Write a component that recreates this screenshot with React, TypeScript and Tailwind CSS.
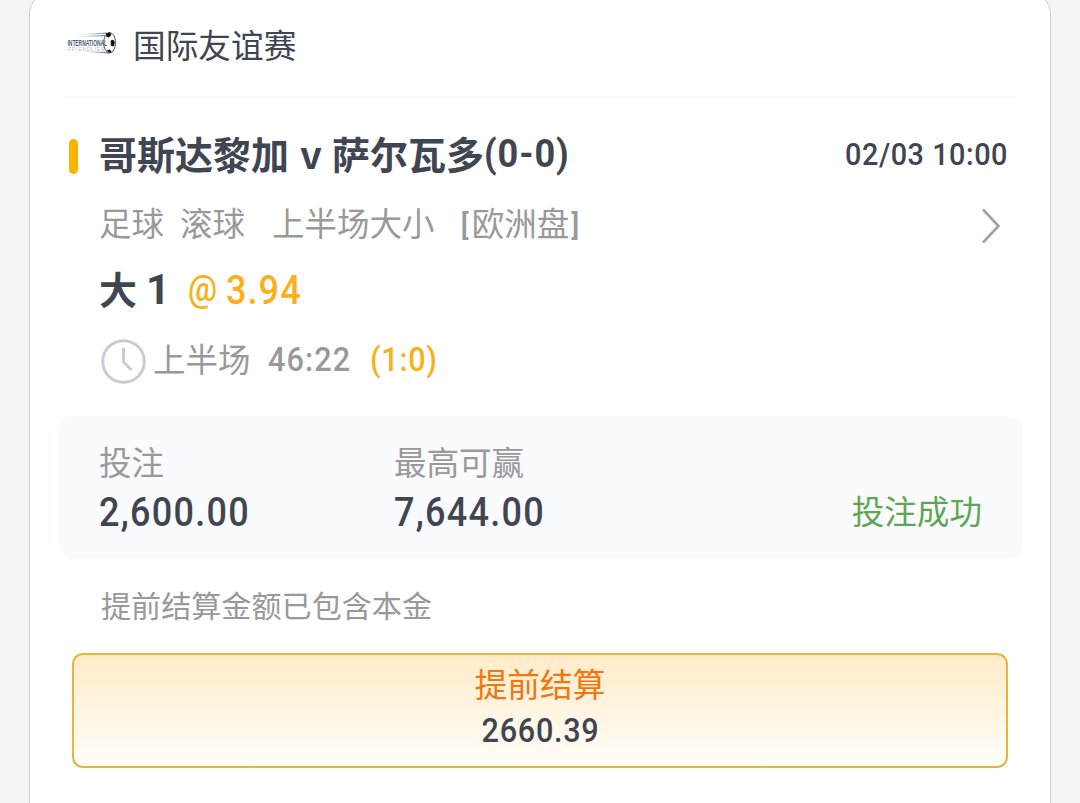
function LeagueLogo() {
  return (
    <svg className="h-[26px] w-[50px] shrink-0 overflow-visible" viewBox="0 0 50 26">
      <defs>
        <linearGradient id="trail" x1="0" x2="1" y1="0" y2="0">
          <stop offset="0" stopColor="#6c7fae" stopOpacity="0" />
          <stop offset="1" stopColor="#4a5a90" stopOpacity="0.8" />
        </linearGradient>
      </defs>
      <path d="M8 4.600 40 2.500v1.200L8 5z M10 6.600 38 4.800v1.400L10 7z M18 22 42 23.400v-1.400L18 21.400z" fill="url(#trail)" />
      <ellipse cx="42.600" cy="12.800" rx="5.900" ry="10.200" fill="#fff" stroke="#444" strokeWidth="0.900" />
      <path d="M39 3.500l3.500-1.200 2 2.200-2.300 3-3-1z M43.600 10.500l2.700-.8 1.600 2.600-1.200 4.200-2.900-.8z M39.500 20.500l3-.9 2.200 2-1.800 1.500z" fill="#111" />
      <text x="0.500" y="15.500" textLength="39.500" lengthAdjust="spacingAndGlyphs" fontFamily="Liberation Sans, sans-serif" fontSize="9" fontWeight="700" fill="#4a5a7c">
        INTERNATIONAL
      </text>
      <text x="1" y="21" textLength="36" fontFamily="Liberation Sans, sans-serif" fontSize="4.500" fill="#b5b5bd">
        FRIENDLIES
      </text>
    </svg>
  );
}

function Amount({ label, value }: { label: string; value: string }) {
  return (
    <div className="w-[295px]">
      <div className="h-[48px] text-[32.500px] leading-[48px] text-[#999999]">{label}</div>
      <div className="mt-[3px] h-[50px] origin-left scale-x-90 font-[Roboto] text-[40px] font-medium leading-[50px] tracking-[1.400px]">
        {value}
      </div>
    </div>
  );
}

export default function App() {
  return (
    <div className="h-[803px] w-[1080px] overflow-hidden bg-[#f4f4f4] px-[29px] font-['Noto_Sans_CJK_SC',sans-serif] text-[#404552]">
      <div className="-mt-2 h-[840px] w-[1022px] rounded-[22px] border border-[#c9d0d3] bg-white pt-[7px]">
        <div className="ml-[34px] flex h-[98px] w-[952px] items-start border-b-2 border-[#fafafa] pt-[20px] pl-[3px]">
          <div className="pt-[10px]">
            <LeagueLogo />
          </div>
          <h1 className="ml-[16px] text-[32.700px] leading-[48px]">国际友谊赛</h1>
        </div>

        <div className="mt-[30px] flex h-[52px] items-center pr-[42px] pl-[39px]">
          <div className="mt-[5px] h-[35px] w-[9px] rounded-full bg-[#ffb301]" />
          <h2 className="-mt-[2px] ml-[21px] flex items-center whitespace-pre text-[38px] leading-[52px] font-bold">
            <span>哥斯达黎加</span>
            <span className="ml-[11px]">v</span>
            <span className="ml-[10px]">萨尔瓦多</span>
            <span className="mt-[2px] origin-left scale-x-95 font-[Roboto] tracking-[1px]">(0-0)</span>
          </h2>
          <span className="ml-auto origin-right scale-x-90 font-[Roboto] text-[32px] font-medium tracking-[0.600px]">02/03 10:00</span>
        </div>

        <div className="mt-[14px] flex h-[56px] items-center pr-[49px] pl-[69px] text-[32.500px] leading-[56px] text-[#999999]">
          <span>足球</span>
          <span className="ml-[16px]">滚球</span>
          <span className="ml-[27px]">上半场大小</span>
          <span className="mt-[5px] ml-[26px] font-[Roboto] text-[30px] font-medium">[</span>
          <span className="ml-[3px]">欧洲盘</span>
          <span className="mt-[5px] ml-[2px] font-[Roboto] text-[30px] font-medium">]</span>
          <svg className="mt-[7px] ml-auto h-[36px] w-[20px]" viewBox="0 0 20 36" fill="none">
            <path d="M2 1.500 17.500 18 2 34.500" stroke="#9ba2af" strokeWidth="2.600" />
          </svg>
        </div>

        <div className="mt-[10px] flex h-[56px] items-center pl-[69px] leading-[56px]">
          <span className="text-[38px] font-bold">大</span>
          <span className="mt-[4px] ml-[9px] font-[Roboto] text-[42px] font-bold">1</span>
          <span className="mt-[1px] ml-[18px] origin-left scale-x-90 font-[Roboto] text-[36px] font-medium text-[#f9b01a]">@</span>
          <span className="mt-[6px] ml-[6px] origin-left scale-x-90 font-[Roboto] text-[40px] font-medium tracking-[1.200px] text-[#f9b01a]">
            3.94
          </span>
        </div>

        <div className="mt-[14px] flex h-[56px] items-center pl-[71px] text-[#999999]">
          <svg className="mt-[7px] h-[46px] w-[46px]" viewBox="0 0 46 46" fill="none" stroke="#c9ccd6" strokeWidth="3">
            <circle cx="22.500" cy="22.500" r="20.800" />
            <path d="M22.500 9v14l8 8" />
          </svg>
          <span className="ml-[6px] -mt-[1px] text-[32.500px] leading-[56px]">上半场</span>
          <span className="mt-[2px] ml-[17px] w-[102px] origin-left scale-x-90 font-[Roboto] text-[34px] font-medium tracking-[1.250px]">
            46:22
          </span>
          <span className="mt-[2px] origin-left scale-x-90 font-[Roboto] text-[34px] font-medium tracking-[0.8px] text-[#f9b01a]">(1:0)</span>
        </div>

        <div className="mt-[30px] ml-[29px] flex h-[143px] w-[964px] rounded-[14px] bg-[#fafbff] pt-[21px] pl-[40px]">
          <Amount label="投注" value="2,600.00" />
          <Amount label="最高可赢" value="7,644.00" />
          <span className="mt-[49px] ml-auto pr-[41px] text-[32.600px] leading-[48px] text-[#5ea652]">投注成功</span>
        </div>

        <p className="mt-[23px] ml-[71px] text-[30.100px] leading-[44px] text-[#999999]">提前结算金额已包含本金</p>

        <button className="mt-[27px] ml-[42px] flex h-[115px] w-[936px] flex-col items-center rounded-[11px] border-2 border-[#e9b43a] bg-linear-to-b from-[#ffebc8] to-[#fffefa] pt-[4px]">
          <span className="text-[32.700px] leading-[48px] text-[#f3750f]">提前结算</span>
          <span className="mt-px scale-x-90 font-[Roboto] text-[34px] leading-[44px] font-medium tracking-[0.8px]">2660.39</span>
        </button>
      </div>
    </div>
  );
}
